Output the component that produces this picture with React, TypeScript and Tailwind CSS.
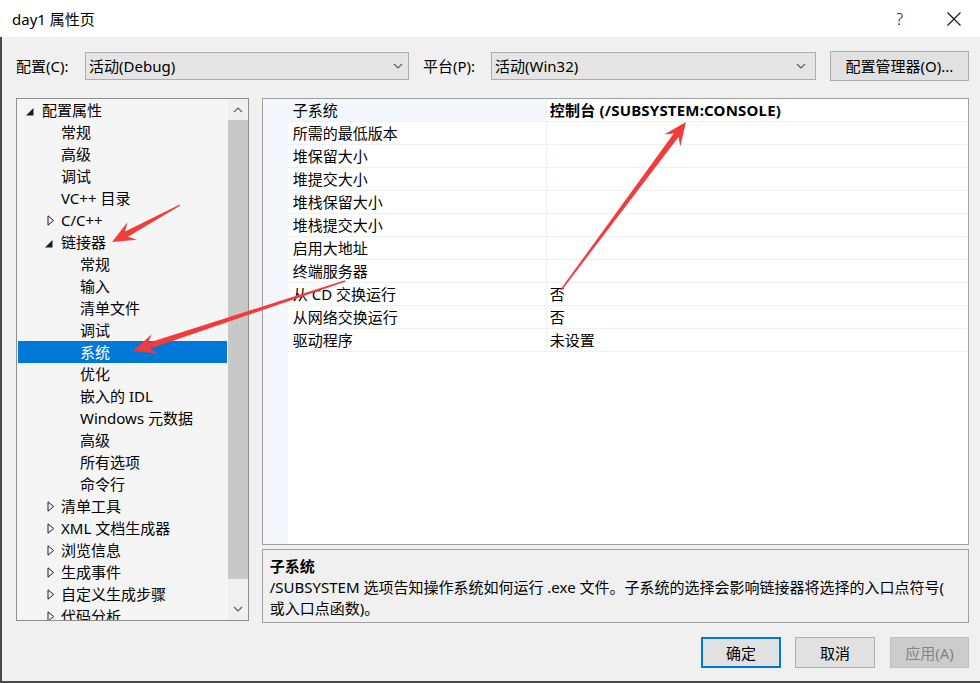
import React from "react";

type TreeItem = { label: string; level: number; icon?: "open" | "closed"; selected?: boolean };

const treeItems: TreeItem[] = [
  { label: "配置属性", level: 0, icon: "open" },
  { label: "常规", level: 1 },
  { label: "高级", level: 1 },
  { label: "调试", level: 1 },
  { label: "VC++ 目录", level: 1 },
  { label: "C/C++", level: 1, icon: "closed" },
  { label: "链接器", level: 1, icon: "open" },
  { label: "常规", level: 2 },
  { label: "输入", level: 2 },
  { label: "清单文件", level: 2 },
  { label: "调试", level: 2 },
  { label: "系统", level: 2, selected: true },
  { label: "优化", level: 2 },
  { label: "嵌入的 IDL", level: 2 },
  { label: "Windows 元数据", level: 2 },
  { label: "高级", level: 2 },
  { label: "所有选项", level: 2 },
  { label: "命令行", level: 2 },
  { label: "清单工具", level: 1, icon: "closed" },
  { label: "XML 文档生成器", level: 1, icon: "closed" },
  { label: "浏览信息", level: 1, icon: "closed" },
  { label: "生成事件", level: 1, icon: "closed" },
  { label: "自定义生成步骤", level: 1, icon: "closed" },
  { label: "代码分析", level: 1, icon: "closed" },
];

const props: [string, string][] = [
  ["子系统", "控制台 (/SUBSYSTEM:CONSOLE)"],
  ["所需的最低版本", ""],
  ["堆保留大小", ""],
  ["堆提交大小", ""],
  ["堆栈保留大小", ""],
  ["堆栈提交大小", ""],
  ["启用大地址", ""],
  ["终端服务器", ""],
  ["从 CD 交换运行", "否"],
  ["从网络交换运行", "否"],
  ["驱动程序", "未设置"],
];

const Chevron = ({ up = false }: { up?: boolean }) => (
  <svg width="10" height="6" viewBox="0 0 10 6">
    <path
      d={up ? "M1 5 L5 1 L9 5" : "M1 1 L5 5 L9 1"}
      fill="none"
      stroke="#606060"
      strokeWidth="1.2"
    />
  </svg>
);

const TreeIcon = ({ kind }: { kind?: "open" | "closed" }) => {
  if (kind === "open")
    return (
      <svg width="8" height="8" viewBox="0 0 8 8" className="mt-[3px]">
        <path d="M7.5 0 L7.5 7.5 L0 7.5 Z" fill="#1e1e1e" />
      </svg>
    );
  if (kind === "closed")
    return (
      <svg width="8" height="11" viewBox="0 0 8 11" className="ml-[2px]">
        <path d="M1 0.8 L6.6 5.5 L1 10.2 Z" fill="none" stroke="#1e1e1e" strokeWidth="1" />
      </svg>
    );
  return null;
};

// red annotation arrows
function arrow(x1: number, y1: number, x2: number, y2: number) {
  const dx = x2 - x1;
  const dy = y2 - y1;
  const len = Math.hypot(dx, dy);
  const ux = dx / len;
  const uy = dy / len;
  const nx = -uy;
  const ny = ux;
  const L = 23;
  const W = 10;
  const w = 3;
  const t = 0.7;
  const hx = x2 - ux * L;
  const hy = y2 - uy * L;
  const sx = x2 - ux * L * 0.72;
  const sy = y2 - uy * L * 0.72;
  const pts = [
    [x1 + nx * t, y1 + ny * t],
    [sx + nx * w, sy + ny * w],
    [hx + nx * W, hy + ny * W],
    [x2, y2],
    [hx - nx * W, hy - ny * W],
    [sx - nx * w, sy - ny * w],
    [x1 - nx * t, y1 - ny * t],
  ];
  return pts.map((p) => p.join(",")).join(" ");
}

const App = () => {
  return (
    <div
      className="relative w-[980px] h-[683px] overflow-hidden bg-[#f0f0f0] text-[15px] text-black flex flex-col"
      style={{ fontFamily: '"Noto Sans", "Noto Sans CJK SC", sans-serif' }}
    >
      {/* title bar */}
      <div className="h-[37px] bg-white flex items-center shrink-0">
        <span className="ml-[12px] leading-[20px]">day1 属性页</span>
        <span className="ml-auto mr-[44px] text-[16px] font-light leading-[20px]">?</span>
        <svg width="14" height="14" viewBox="0 0 14 14" className="mr-[19px]">
          <path d="M0.5 0.5 L13.5 13.5 M13.5 0.5 L0.5 13.5" stroke="#111" strokeWidth="1.1" />
        </svg>
      </div>

      {/* body */}
      <div className="flex-1 flex flex-col border-l-2 border-b-2 border-[#4a4a4a] pl-[14px] pr-[11px] pt-[14px]">
        {/* config row */}
        <div className="flex items-center h-[30px]">
          <span className="w-[69px] leading-[20px]">配置(C):</span>
          <div className="w-[324px] h-[28px] bg-[#e5e5e5] border border-[#adadad] flex items-center pl-[3px] pr-[5px]">
            <span className="leading-[20px]">活动(Debug)</span>
            <span className="ml-auto"><Chevron /></span>
          </div>
          <span className="ml-[14px] w-[68px] leading-[20px]">平台(P):</span>
          <div className="w-[325px] h-[28px] bg-[#e5e5e5] border border-[#adadad] flex items-center pl-[3px] pr-[9px]">
            <span className="leading-[20px]">活动(Win32)</span>
            <span className="ml-auto"><Chevron /></span>
          </div>
          <button className="ml-[14px] w-[139px] h-[30px] bg-[#e1e1e1] border border-[#adadad] flex items-center justify-center leading-[20px]">
            配置管理器(O)...
          </button>
        </div>

        {/* main */}
        <div className="flex mt-[17px] gap-[13px]">
          {/* tree */}
          <div className="w-[233px] h-[523px] border border-[#8f8f8f] bg-[#f5f5f5] flex">
            <div className="flex-1 overflow-hidden">
              {treeItems.map((it, i) => (
                <div
                  key={i}
                  className={`h-[22px] mx-px flex items-center ${it.selected ? "bg-[#0078d7] text-white" : ""}`}
                  style={{ paddingLeft: 8 + it.level * 19 }}
                >
                  <span className="w-[16px] flex items-center">
                    <TreeIcon kind={it.icon} />
                  </span>
                  <span className="leading-[20px] whitespace-nowrap">{it.label}</span>
                </div>
              ))}
            </div>
            <div className="w-[20px] bg-[#f0f0f0] flex flex-col">
              <div className="h-[21px] flex items-center justify-center">
                <Chevron up />
              </div>
              <div className="h-[459px] bg-[#c8c8c8]" />
              <div className="flex-1 flex items-end justify-center pb-[8px]">
                <Chevron />
              </div>
            </div>
          </div>

          {/* right column */}
          <div className="w-[708px] flex flex-col gap-[4px]">
            <div className="h-[447px] border border-[#a0a0a0] bg-white flex">
              <div className="w-[25px] bg-[#f3f6fb]" />
              <div className="flex-1">
                {props.map(([name, value], i) => (
                  <div key={i} className="h-[23px] flex border-b border-[#eef2f8]">
                    <div
                      className={`w-[258px] pl-[5px] flex items-center ${i === 0 ? "bg-[#f3f6fb]" : ""}`}
                    >
                      <span className="leading-[20px] whitespace-nowrap">{name}</span>
                    </div>
                    <div className="flex-1 border-l border-[#eef2f8] pl-[3px] flex items-center">
                      <span className={`leading-[20px] whitespace-nowrap ${i === 0 ? "font-bold tracking-[0.2px]" : ""}`}>
                        {value}
                      </span>
                    </div>
                  </div>
                ))}
              </div>
            </div>
            <div className="h-[74px] border border-[#a0a0a0] bg-[#f0f0f0] pl-[7px] pt-[6px] leading-[21px]">
              <div className="font-bold">子系统</div>
              <div className="whitespace-nowrap">
                /SUBSYSTEM 选项告知操作系统如何运行 .exe 文件。子系统的选择会影响链接器将选择的入口点符号(
              </div>
              <div>或入口点函数)。</div>
            </div>
          </div>
        </div>

        {/* buttons */}
        <div className="flex justify-end items-start mt-[14px]">
          <button className="w-[80px] h-[31px] bg-[#e1e1e1] border-2 border-[#0078d7] flex items-center justify-center leading-[20px]">确定</button>
          <button className="ml-[14px] w-[80px] h-[31px] bg-[#e1e1e1] border border-[#adadad] flex items-center justify-center leading-[20px]">取消</button>
          <button className="ml-[15px] w-[79px] h-[31px] bg-[#cccccc] border border-[#bfbfbf] text-[#838383] flex items-center justify-center leading-[20px]">
            应用(A)
          </button>
        </div>
      </div>

      {/* annotation arrows */}
      <svg className="absolute inset-0 pointer-events-none" width="980" height="683">
        <polygon points={arrow(180, 205, 112, 242)} fill="#f23c3c" />
        <polygon points={arrow(345, 281, 133, 351)} fill="#f23c3c" />
        <polygon points={arrow(561, 290, 686, 122)} fill="#f23c3c" />
      </svg>
    </div>
  );
};

export default App;
